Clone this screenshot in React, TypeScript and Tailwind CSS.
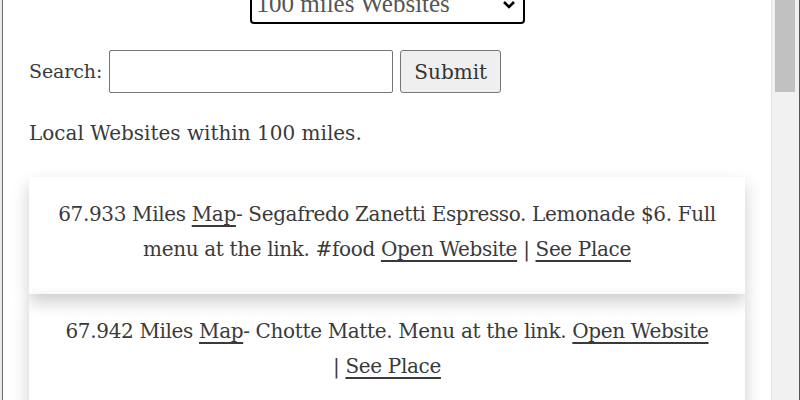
export default function App() {
  const places = [
    {
      miles: "67.933",
      text: "Segafredo Zanetti Espresso. Lemonade $6. Full menu at the link. #food",
    },
    {
      miles: "67.942",
      text: "Chotte Matte. Menu at the link.",
    },
  ];

  return (
    <div className="flex h-[400px] w-[800px] overflow-hidden bg-white">
      {/* window edge */}
      <div className="h-full w-[3px] shrink-0 border-r border-[#6b6b6b] bg-[#e9e9e9]" />

      {/* page */}
      <div
        className="flex min-w-0 flex-1 flex-col text-[#3a3a3a]"
        style={{ fontFamily: '"DejaVu Serif", serif' }}
      >
        <div className="-mt-[18px] flex justify-center">
          <div className="relative">
            <select
              className="h-[42px] w-[275px] appearance-none rounded-[4px] border-2 border-black bg-white pl-[5px] text-[25px] leading-none text-[#555]"
              style={{ fontFamily: '"Liberation Serif", serif' }}
              defaultValue="100"
            >
              <option value="100">100 miles Websites</option>
            </select>
            <svg
              className="pointer-events-none absolute right-[9px] top-[18px]"
              width="14"
              height="10"
              viewBox="0 0 14 10"
            >
              <path d="M2 2 L7 7 L12 2" fill="none" stroke="black" strokeWidth="2.6" />
            </svg>
          </div>
        </div>

        <form className="mt-[26px] flex items-center gap-[7px] pl-[26px]">
          <label className="text-[19px] tracking-[-0.1px]">Search:</label>
          <input className="h-[43px] w-[284px] rounded-[2px] border border-[#767676] bg-white" />
          <button
            type="button"
            className="h-[43px] w-[101px] rounded-[3px] border border-[#767676] bg-[#efefef] text-[20px] text-[#333]"
          >
            Submit
          </button>
        </form>

        <p className="mt-[26px] pl-[26px] text-[20px] leading-[28px]">
          Local Websites within 100 miles.
        </p>

        <div className="mt-[30px] flex flex-col pl-[26px] pr-[26px]">
          {places.map((p) => (
            <div
              key={p.miles}
              className="px-[27px] pb-[27px] pt-[20px] text-center text-[20px] leading-[35px] tracking-[-0.35px] shadow-[0_8px_16px_0_rgba(0,0,0,0.2)]"
            >
              {p.miles} Miles <a className="underline underline-offset-[4px]">Map</a>- {p.text}{" "}
              <a className="underline underline-offset-[4px]">Open Website</a>{" "}
              <span className="whitespace-nowrap">
                | <a className="underline underline-offset-[4px]">See Place</a>
              </span>
            </div>
          ))}
        </div>
      </div>

      {/* scrollbar */}
      <div className="flex h-full w-[28px] shrink-0 flex-col border-l border-[#e4e4e4] bg-[#f1f1f1] pl-[3px] pr-[4px]">
        <div className="h-[92px] w-full bg-[#c1c1c1]" />
      </div>
      <div className="h-full w-[1px] shrink-0 bg-[#555]" />
    </div>
  );
}
